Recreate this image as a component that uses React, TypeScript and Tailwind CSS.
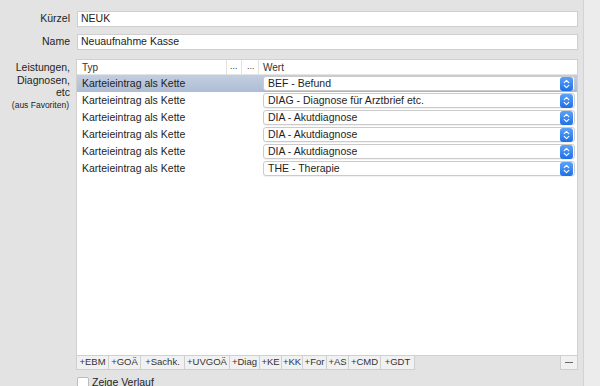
const rows = [
  { typ: "Karteieintrag als Kette", wert: "BEF - Befund" },
  { typ: "Karteieintrag als Kette", wert: "DIAG - Diagnose für Arztbrief etc." },
  { typ: "Karteieintrag als Kette", wert: "DIA - Akutdiagnose" },
  { typ: "Karteieintrag als Kette", wert: "DIA - Akutdiagnose" },
  { typ: "Karteieintrag als Kette", wert: "DIA - Akutdiagnose" },
  { typ: "Karteieintrag als Kette", wert: "THE - Therapie" },
];

const buttons = [
  { label: "+EBM", w: "w-[32px]" },
  { label: "+GOÄ", w: "w-[32px]" },
  { label: "+Sachk.", w: "w-[44px]" },
  { label: "+UVGOÄ", w: "w-[45px]" },
  { label: "+Diag", w: "w-[30px]" },
  { label: "+KE", w: "w-[22px]" },
  { label: "+KK", w: "w-[21px]" },
  { label: "+For", w: "w-[24px]" },
  { label: "+AS", w: "w-[22px]" },
  { label: "+CMD", w: "w-[32px]" },
  { label: "+GDT", w: "w-[34px]" },
];

function Stepper() {
  return (
    <div className="w-[13px] h-[14px] rounded-[3px] bg-gradient-to-b from-[#5aa2f8] to-[#1c6fe8] flex items-center justify-center">
      <svg width="7" height="10" viewBox="0 0 7 10" fill="none">
        <path d="M1.2 3.6 L3.5 1.4 L5.8 3.6" stroke="white" strokeWidth="1.1" strokeLinecap="round" strokeLinejoin="round" />
        <path d="M1.2 6.4 L3.5 8.6 L5.8 6.4" stroke="white" strokeWidth="1.1" strokeLinecap="round" strokeLinejoin="round" />
      </svg>
    </div>
  );
}

function TextField({ value }: { value: string }) {
  return (
    <div className="ml-[7px] w-[501px] h-[16px] bg-white border border-[#cfcfcf] flex items-center px-[3px] text-[10.5px] text-[#222]">
      {value}
    </div>
  );
}

export default function App() {
  return (
    <div className="w-[600px] h-[386px] flex bg-[#e3e3e3] overflow-hidden font-['Helvetica_Neue','Liberation_Sans',Arial,sans-serif] text-[#1e1e1e]">
      <div className="w-[584px] border-r border-[#d3d3d3] pt-[11px] flex flex-col">
        <div className="flex items-center h-[16px]">
          <div className="w-[70px] text-right text-[10.5px]">Kürzel</div>
          <TextField value="NEUK" />
        </div>
        <div className="flex items-center h-[16px] mt-[7px]">
          <div className="w-[70px] text-right text-[10.5px]">Name</div>
          <TextField value="Neuaufnahme Kasse" />
        </div>

        <div className="flex mt-[9px]">
          <div className="w-[70px] text-right text-[10.5px] leading-[12.5px] pt-[2px]">
            <div>Leistungen,</div>
            <div>Diagnosen,</div>
            <div>etc</div>
            <div className="text-[8.5px] leading-[12px] mr-[1px]">(aus Favoriten)</div>
          </div>
          <div className="ml-[6px] w-[502px] flex flex-col">
            <div className="h-[297px] bg-white border border-[#d0d0d0] flex flex-col">
              <div className="h-[15px] flex items-center text-[10px] text-[#333] border-b border-[#e4e4e4]">
                <div className="w-[150px] pl-[5px] border-r border-[#e2e2e2] h-full flex items-center">Typ</div>
                <div className="w-[15px] pl-[3px] border-r border-[#e2e2e2] h-full flex items-center text-[9px]">...</div>
                <div className="w-[17px] pl-[5px] border-r border-[#e2e2e2] h-full flex items-center text-[9px]">...</div>
                <div className="pl-[4px] h-full flex items-center">Wert</div>
              </div>
              {rows.map((r, i) => (
                <div
                  key={i}
                  className={
                    i === 0
                      ? "h-[17px] flex items-center bg-gradient-to-b from-[#c2cee0] to-[#aebdd5] text-[10.5px]"
                      : "h-[17px] flex items-center text-[10.5px]"
                  }
                >
                  <div className="w-[186px] pl-[5px]">{r.typ}</div>
                  <div className="w-[312px] h-[15px] bg-white border border-[#cbcbcb] rounded-[3px] flex items-center justify-between pl-[4px] pr-[1px] shadow-[0_1px_0_rgba(0,0,0,0.05)]">
                    <span>{r.wert}</span>
                    <Stepper />
                  </div>
                </div>
              ))}
            </div>
            <div className="flex h-[14px] items-stretch">
              <div className="flex border-l border-[#cfcfcf]">
                {buttons.map((b) => (
                  <div
                    key={b.label}
                    className={`${b.w} bg-[#f1f1f1] border-r border-b border-[#cfcfcf] flex items-center justify-center text-[9.5px] text-[#333]`}
                  >
                    {b.label}
                  </div>
                ))}
              </div>
              <div className="flex-1" />
              <div className="w-[18px] bg-[#f1f1f1] border border-t-0 border-[#cfcfcf] flex items-center justify-center">
                <div className="w-[8px] h-[1px] bg-[#666]" />
              </div>
            </div>
            <div className="flex items-center mt-[5px] ml-[1px]">
              <div className="w-[12px] h-[12px] bg-white border border-[#bdbdbd] rounded-[2px]" />
              <span className="ml-[3px] text-[10.5px]">Zeige Verlauf</span>
            </div>
          </div>
        </div>
      </div>
      <div className="flex-1 bg-[#ececec]" />
    </div>
  );
}
